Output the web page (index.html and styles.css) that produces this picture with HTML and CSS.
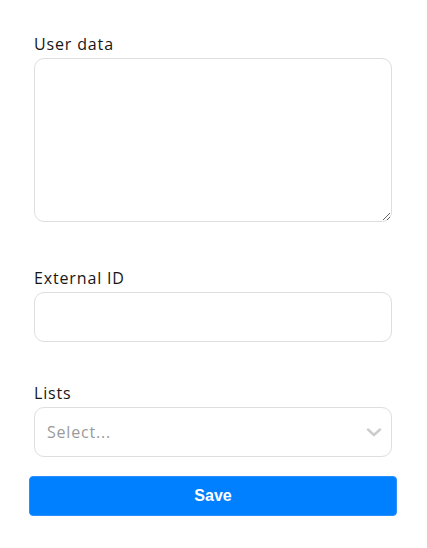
FILE: index.html
```html
<!DOCTYPE html>
<html lang="en">
<head>
<meta charset="utf-8">
<title>Form</title>
<link rel="stylesheet" href="styles.css">
</head>
<body>
<form class="form">
  <div class="field field-textarea">
    <label class="label" for="userdata">User data</label>
    <textarea id="userdata" class="control textarea"></textarea>
  </div>
  <div class="field">
    <label class="label" for="extid">External ID</label>
    <input id="extid" class="control input" type="text">
  </div>
  <div class="field field-last">
    <label class="label">Lists</label>
    <div class="control select">
      <span class="placeholder">Select...</span>
      <svg class="chevron" width="16" height="9" viewBox="0 0 16 9"><path d="M2 1.5 L8 7 L14 1.5" fill="none" stroke="#cccccc" stroke-width="2.4" stroke-linecap="round" stroke-linejoin="round"/></svg>
    </div>
  </div>
  <button type="button" class="btn">Save</button>
</form>
</body>
</html>
```
FILE: styles.css
```css
html, body {
  margin: 0;
  padding: 0;
  background: #ffffff;
}
.form {
  width: 358px;
  padding: 34px 0 0 34px;
  font-family: "Open Sans", "Liberation Sans", sans-serif;
}
.field {
  display: flex;
  flex-direction: column;
  margin-bottom: 41px;
}
.field-textarea {
  margin-bottom: 46px;
}
.field-last {
  margin-bottom: 19px;
}
.label {
  font-size: 16px;
  line-height: 20px;
  letter-spacing: 0.85px;
  color: #161616;
  margin-bottom: 4px;
}
.control {
  box-sizing: border-box;
  width: 358px;
  border: 1px solid #dedede;
  border-radius: 10px;
  background: #ffffff;
  margin: 0;
  font-family: inherit;
  font-size: 16px;
  outline: none;
}
.textarea {
  display: block;
  height: 164px;
  resize: vertical;
  padding: 8px 12px;
}
.input {
  height: 50px;
  padding: 0 12px;
}
.select {
  height: 50px;
  display: flex;
  align-items: center;
  justify-content: space-between;
  padding: 0 9px 0 12px;
}
.placeholder {
  color: #9a9a9a;
  font-size: 16px;
  letter-spacing: 0.8px;
}
.chevron {
  display: block;
}
.btn {
  display: block;
  box-sizing: border-box;
  width: 368px;
  height: 40px;
  margin: 0 0 0 -5px;
  background: #0080ff;
  border: 1px solid #2b8fff;
  border-radius: 4px;
  color: #ffffff;
  font-family: "Liberation Sans", Arial, sans-serif;
  font-weight: bold;
  font-size: 16px;
  cursor: pointer;
}
```
